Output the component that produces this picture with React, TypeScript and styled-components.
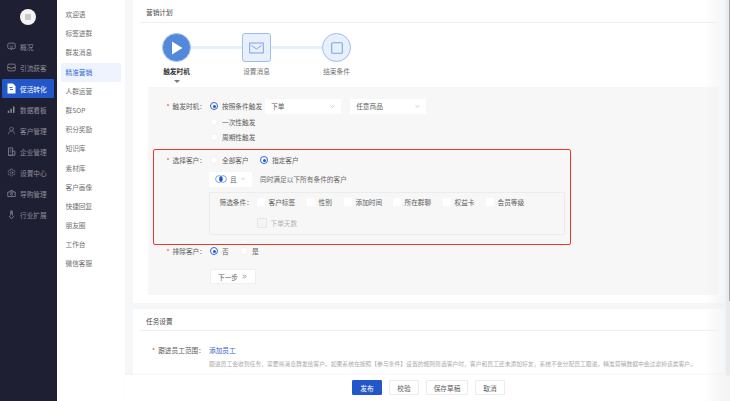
import React from "react"
import styled, { createGlobalStyle } from "styled-components"
import { UserRound, Settings, ChevronDown, ChevronsRight } from "lucide-react"

const GlobalStyle = createGlobalStyle`
  html, body { margin: 0; padding: 0; height: 100%; }
  body {
    font-family: "Noto Sans CJK SC", "Noto Sans", sans-serif;
    font-size: 6.7px;
    color: #666;
    background: #fff;
    overflow: hidden;
  }
  * { box-sizing: border-box; }
`

const Page = styled.div`
  display: flex;
  width: 730px;
  height: 401px;
  overflow: hidden;
`

const Sidebar = styled.aside`
  width: 57px;
  flex: none;
  background: #1f1f33;
  padding: 7px 3px 0 2px;
`

const Logo = styled.div`
  width: 16px;
  height: 16px;
  margin: 2px auto 12px;
  border-radius: 50%;
  background: #f4f4f4;
  display: flex;
  align-items: center;
  justify-content: center;
  &::after {
    content: "";
    width: 6px;
    height: 6px;
    border-radius: 1px;
    background: #c9c9c9;
  }
`

const SideItem = styled.div<{ $active?: boolean }>`
  height: 19px;
  margin-bottom: 2px;
  display: flex;
  align-items: center;
  gap: 4px;
  padding-left: 5px;
  border-radius: 1px;
  color: ${({ $active }) => ($active ? "#ffffff" : "#8d8d9b")};
  background: ${({ $active }) => ($active ? "#2257c9" : "transparent")};
  svg { flex: none; }
`

const SubNav = styled.nav`
  width: 68px;
  flex: none;
  background: #fff;
  padding: 5px 4px 0;
`

const SubItem = styled.div<{ $active?: boolean }>`
  height: 19.2px;
  line-height: 19.2px;
  padding-left: 4.5px;
  border-radius: 1px;
  color: ${({ $active }) => ($active ? "#2f66d0" : "#707070")};
  background: ${({ $active }) => ($active ? "#eef3fd" : "transparent")};
`

const Main = styled.main`
  position: relative;
  flex: 1;
  min-width: 0;
  background: #f6f7f8;
  display: flex;
  flex-direction: column;
`

const Scroll = styled.div`
  flex: 1;
  min-height: 0;
  overflow: hidden;
  padding: 0 4px 0 8px;
`

const Card = styled.section`
  background: #fff;
  padding: 0 8px 8px 7px;
  margin-bottom: 6px;
`

const CardTitle = styled.div<{ $h?: number }>`
  height: ${({ $h }) => $h ?? 23}px;
  line-height: 24px;
  border-bottom: 1px solid #eeeff1;
  color: #4a4a4a;
  padding-left: 6px;
`

const Steps = styled.div`
  display: flex;
  height: 64px;
  margin-left: -3.5px;
  padding-top: 10px;
`

const Step = styled.div<{ $last?: boolean }>`
  position: relative;
  width: 80px;
  flex: none;
  display: flex;
  flex-direction: column;
  align-items: center;
  gap: 4px;
  &::after {
    content: "";
    display: ${({ $last }) => ($last ? "none" : "block")};
    position: absolute;
    top: 13px;
    left: 54px;
    width: 52px;
    height: 3px;
    background: #e6effc;
  }
`

const StepIcon = styled.div<{ $kind: "play" | "mail" | "stop" }>`
  position: relative;
  z-index: 1;
  width: 29px;
  height: 29px;
  display: flex;
  align-items: center;
  justify-content: center;
  border-radius: ${({ $kind }) => ($kind === "mail" ? "3px" : "50%")};
  background: ${({ $kind }) => ($kind === "play" ? "#5289db" : "#e8f0fc")};
  border: 1px solid ${({ $kind }) => ($kind === "play" ? "#a9c5ef" : "#9dbdee")};
`

const StepLabel = styled.div<{ $active?: boolean }>`
  line-height: 10px;
  color: ${({ $active }) => ($active ? "#333" : "#707070")};
  font-weight: ${({ $active }) => ($active ? 600 : 400)};
`

const Caret = styled.div`
  width: 0;
  height: 0;
  border-left: 3.5px solid transparent;
  border-right: 3.5px solid transparent;
  border-top: 3px solid #7a7a7a;
`

const Panel = styled.div`
  background: #f7f7f7;
  margin-left: 8px;
  padding: 11px 0 11px 5px;
`

const Row = styled.div<{ $h?: number; $mt?: number; $pl?: number }>`
  display: flex;
  align-items: center;
  height: ${({ $h }) => $h ?? 16}px;
  margin-top: ${({ $mt }) => $mt ?? 0}px;
  padding-left: ${({ $pl }) => $pl ?? 0}px;
`

const Label = styled.div<{ $w?: number; $left?: boolean }>`
  width: ${({ $w }) => $w ?? 57}px;
  flex: none;
  padding-right: 4px;
  text-align: ${({ $left }) => ($left ? "left" : "right")};
  color: #606060;
  white-space: nowrap;
  em {
    font-style: normal;
    color: #e03a2f;
    margin-right: 3px;
  }
`

const Indent = styled.div`
  padding-left: 57px;
`

const RadioGroup = styled.label<{ $w?: number }>`
  display: flex;
  align-items: center;
  gap: 4px;
  color: #606060;
  white-space: nowrap;
  width: ${({ $w }) => ($w ? `${$w}px` : "auto")};
  flex: none;
`

const Radio = styled.span<{ $on?: boolean }>`
  position: relative;
  width: 8px;
  height: 8px;
  flex: none;
  border-radius: 50%;
  background: #fff;
  border: 0.6px solid ${({ $on }) => ($on ? "#2f66d0" : "#f0f0f0")};
  &::after {
    content: "";
    display: ${({ $on }) => ($on ? "block" : "none")};
    position: absolute;
    left: 1.7px;
    top: 1.7px;
    width: 3.4px;
    height: 3.4px;
    border-radius: 50%;
    background: #2257c9;
  }
`

const SelectBox = styled.div<{ $w: number; $ml?: number }>`
  width: ${({ $w }) => $w}px;
  margin-left: ${({ $ml }) => $ml ?? 0}px;
  height: 15px;
  flex: none;
  display: flex;
  align-items: center;
  justify-content: space-between;
  padding: 0 5px 0 6px;
  background: #fff;
  color: #606060;
  border-radius: 1px;
  svg { color: #aaa; }
`

const Highlight = styled.div`
  width: 417.5px;
  height: 96px;
  margin-top: 4px;
  padding-top: 3px;
  border: 1.5px solid #e9392b;
  border-radius: 2px;
`

const AndSelect = styled.div`
  width: 43px;
  height: 15px;
  display: flex;
  align-items: center;
  gap: 3px;
  padding-left: 6px;
  background: #fff;
  flex: none;
  svg { flex: none; }
`

const Hint = styled.div`
  margin-left: 8px;
  color: #6a6a6a;
`

const FilterBox = styled.div`
  width: 356px;
  height: 43px;
  margin: 5px 0 0 54.5px;
  border: 1px solid #ececec;
  border-radius: 1px;
  padding: 2px 0 0 10px;
`

const Check = styled.label<{ $w?: number; $off?: boolean }>`
  display: flex;
  align-items: center;
  gap: 4px;
  flex: none;
  width: ${({ $w }) => ($w ? `${$w}px` : "auto")};
  color: ${({ $off }) => ($off ? "#b5b5b5" : "#606060")};
  &::before {
    content: "";
    width: 8px;
    height: 8px;
    flex: none;
    border-radius: 1px;
    background: ${({ $off }) => ($off ? "#f5f5f5" : "#fff")};
    border: ${({ $off }) => ($off ? "0.6px solid #e6e6e6" : "0")};
  }
`

const NextBtn = styled.div`
  width: 46px;
  height: 15px;
  margin: 12px 0 0 57px;
  background: #fff;
  border: 0.6px solid #efefef;
  display: flex;
  align-items: center;
  justify-content: center;
  gap: 3px;
  color: #606060;
`

const LinkText = styled.span`
  color: #2f66d0;
`

const Desc = styled.div`
  margin: 1px 0 0 69px;
  font-size: 5.8px;
  color: #aaa;
  white-space: nowrap;
  line-height: 12px;
`

const Footer = styled.footer`
  height: 26px;
  flex: none;
  background: #fff;
  box-shadow: 0 -1px 3px rgba(0, 0, 0, 0.04);
  display: flex;
  align-items: center;
  gap: 7px;
  padding: 0 0 1px 227px;
  position: relative;
  z-index: 1;
`

const Btn = styled.div<{ $primary?: boolean; $w?: number }>`
  width: ${({ $w }) => $w ?? 30}px;
  height: 15px;
  line-height: 14px;
  text-align: center;
  border-radius: 1px;
  background: ${({ $primary }) => ($primary ? "#2257c9" : "#fff")};
  color: ${({ $primary }) => ($primary ? "#fff" : "#606060")};
  border: 0.6px solid ${({ $primary }) => ($primary ? "#2257c9" : "#ececec")};
`

// the browser's scrollbar edge, drawn over the content
const Fade = styled.div`
  position: absolute;
  z-index: 2;
  top: 0;
  right: 4px;
  bottom: 0;
  width: 22px;
  background: linear-gradient(to right, rgba(240, 240, 242, 0), rgba(240, 240, 242, 0.75));
  pointer-events: none;
`

const Track = styled.div`
  position: absolute;
  z-index: 2;
  top: 0;
  right: 0;
  bottom: 0;
  width: 4px;
  background: linear-gradient(to bottom, #e9eaec 0, #e9eaec 375px, #f4f4f5 376px);
`

const Thumb = styled.div`
  position: absolute;
  z-index: 3;
  top: 0;
  right: 0;
  width: 1.5px;
  height: 301px;
  background: #a6a6a8;
`

const Glyph = ({ children, fill }: { children: React.ReactNode; fill?: string }) => (
  <svg width="9" height="9" viewBox="0 0 12 12" fill={fill ?? "none"} stroke="currentColor" strokeWidth="1">
    {children}
  </svg>
)

const OverviewIcon = () => (
  <Glyph>
    <rect x="1" y="1.5" width="10" height="7.5" rx="2" />
    <path d="M4 4.2v.8M8 4.2v.8M4.2 6.6h3.6M6 9v1.6" />
  </Glyph>
)

const TrafficIcon = () => (
  <Glyph>
    <rect x="1" y="1.5" width="10" height="9" rx="1.5" />
    <path d="M1 6h3.2v1h3.6V6H11" />
  </Glyph>
)

const ConvertIcon = () => (
  <svg width="9" height="11" viewBox="0 0 9 11">
    <path d="M0.5 0.5h5.5l2.5 2.5v7.5h-8z" fill="#fff" />
    <path d="M2.5 4.5h3M3 6.5h3" stroke="#2257c9" strokeWidth="0.9" />
  </svg>
)

const BoardIcon = () => (
  <Glyph fill="currentColor">
    <rect x="1" y="7.5" width="2" height="3" stroke="none" />
    <rect x="4.5" y="5" width="2" height="5.5" stroke="none" />
    <rect x="8" y="2" width="2" height="8.5" stroke="none" />
  </Glyph>
)

const CompanyIcon = () => (
  <Glyph>
    <path d="M2 11V1.2h5.5V11zM7.5 5.5H10.5V11H2M3.8 4h2M3.8 6.5h2" />
  </Glyph>
)

const GuideIcon = () => (
  <Glyph>
    <path d="M1 4h10v6H1zM3.5 4l1-2h3l1 2" />
    <circle cx="6" cy="7" r="1.4" />
  </Glyph>
)

const IndustryIcon = () => (
  <Glyph>
    <path d="M5 1.2h2v5.3a2.4 2.4 0 1 1-2 0zM7 2.8H5M7 4.4H5" />
  </Glyph>
)

const sideItems = [
  { label: "概况", icon: <OverviewIcon /> },
  { label: "引流获客", icon: <TrafficIcon /> },
  { label: "促活转化", icon: <ConvertIcon />, active: true },
  { label: "数据看板", icon: <BoardIcon /> },
  { label: "客户管理", icon: <UserRound size={9} strokeWidth={1.4} /> },
  { label: "企业管理", icon: <CompanyIcon /> },
  { label: "设置中心", icon: <Settings size={9} strokeWidth={1.4} /> },
  { label: "导购管理", icon: <GuideIcon /> },
  { label: "行业扩展", icon: <IndustryIcon /> },
]

const subItems = [
  "欢迎语", "标签进群", "群发消息", "精准营销", "人群运营", "群SOP", "积分奖励",
  "知识库", "素材库", "客户画像", "快捷回复", "朋友圈", "工作台", "微信客服",
]

const filters: [string, number][] = [
  ["客户标签", 50],
  ["性别", 37],
  ["添加时间", 49],
  ["所在群聊", 50],
  ["权益卡", 43],
  ["会员等级", 40],
]

export default function App() {
  return (
    <Page>
      <GlobalStyle />
      <Sidebar>
        <Logo />
        {sideItems.map(({ label, icon, active }) => (
          <SideItem key={label} $active={active}>
            {icon}
            {label}
          </SideItem>
        ))}
      </Sidebar>
      <SubNav>
        {subItems.map((item) => (
          <SubItem key={item} $active={item === "精准营销"}>{item}</SubItem>
        ))}
      </SubNav>
      <Main>
        <Fade />
        <Track />
        <Thumb />
        <Scroll>
          <Card>
            <CardTitle>营销计划</CardTitle>
            <Steps>
              <Step>
                <StepIcon $kind="play">
                  <svg width="14" height="16" viewBox="0 0 14 16">
                    <path d="M2 1.5 L12.5 8 L2 14.5 Z" fill="#fff" />
                  </svg>
                </StepIcon>
                <StepLabel $active>触发时机</StepLabel>
                <Caret />
              </Step>
              <Step>
                <StepIcon $kind="mail">
                  <svg width="15" height="12" viewBox="0 0 15 12" fill="none" stroke="#7ba4e4" strokeWidth="1">
                    <rect x="0.7" y="1" width="13.6" height="10" />
                    <path d="M2.5 3.5 L7.5 7 L12.5 3.5" />
                  </svg>
                </StepIcon>
                <StepLabel>设置消息</StepLabel>
              </Step>
              <Step $last>
                <StepIcon $kind="stop">
                  <svg width="12" height="12" viewBox="0 0 12 12" fill="none" stroke="#7ba4e4" strokeWidth="1.1">
                    <rect x="0.7" y="0.7" width="10.6" height="10.6" rx="1" />
                  </svg>
                </StepIcon>
                <StepLabel>结束条件</StepLabel>
              </Step>
            </Steps>
            <Panel>
              <Row>
                <Label><em>*</em>触发时机：</Label>
                <RadioGroup><Radio $on />按照条件触发</RadioGroup>
                <SelectBox $w={76} $ml={3}>下单<ChevronDown size={7} /></SelectBox>
                <SelectBox $w={76} $ml={9}>任意商品<ChevronDown size={7} /></SelectBox>
              </Row>
              <Indent>
                <Row $h={15.5}><RadioGroup><Radio />一次性触发</RadioGroup></Row>
                <Row $h={15.5}><RadioGroup><Radio />周期性触发</RadioGroup></Row>
              </Indent>
              <Highlight>
                <Row $h={14}>
                  <Label $w={56}><em>*</em>选择客户：</Label>
                  <RadioGroup $w={50}><Radio />全部客户</RadioGroup>
                  <RadioGroup><Radio $on />指定客户</RadioGroup>
                </Row>
                <Row $h={15} $mt={4.5} $pl={55}>
                  <AndSelect>
                    <svg width="12" height="8" viewBox="0 0 12 8">
                      <circle cx="4" cy="4" r="3.4" fill="#fff" stroke="#5d8fdc" strokeWidth="0.8" />
                      <circle cx="8" cy="4" r="3.4" fill="#fff" stroke="#5d8fdc" strokeWidth="0.8" />
                      <path d="M6 1 A3.4 3.4 0 0 1 6 7 A3.4 3.4 0 0 1 6 1" fill="#2257c9" />
                    </svg>
                    且
                    <ChevronDown size={6} color="#999" />
                  </AndSelect>
                  <Hint>同时满足以下所有条件的客户</Hint>
                </Row>
                <FilterBox>
                  <Row $h={15}>
                    <Label $w={37} $left>筛选条件：</Label>
                    {filters.map(([name, w]) => (
                      <Check key={name} $w={w}>{name}</Check>
                    ))}
                  </Row>
                  <Row $h={15} $mt={6} $pl={37}>
                    <Check $off>下单天数</Check>
                  </Row>
                </FilterBox>
              </Highlight>
              <Row $h={12}>
                <Label><em>*</em>排除客户：</Label>
                <RadioGroup $w={30}><Radio $on />否</RadioGroup>
                <RadioGroup><Radio />是</RadioGroup>
              </Row>
              <NextBtn>下一步<ChevronsRight size={7} /></NextBtn>
            </Panel>
          </Card>
          <Card>
            <CardTitle $h={22}>任务设置</CardTitle>
            <Row $h={14} $mt={12}>
              <Label $w={69}><em>*</em>跟进员工范围：</Label>
              <LinkText>添加员工</LinkText>
            </Row>
            <Desc>
              跟进员工会收到任务，需要将消息群发给客户。如果系统在按照【参与条件】设置的规则筛选客户时，客户和员工还未添加好友，系统不会分配员工跟进。精准营销数据中会过滤掉该类客户。
            </Desc>
          </Card>
        </Scroll>
        <Footer>
          <Btn $primary>发布</Btn>
          <Btn>校验</Btn>
          <Btn $w={42}>保存草稿</Btn>
          <Btn>取消</Btn>
        </Footer>
      </Main>
    </Page>
  )
}
